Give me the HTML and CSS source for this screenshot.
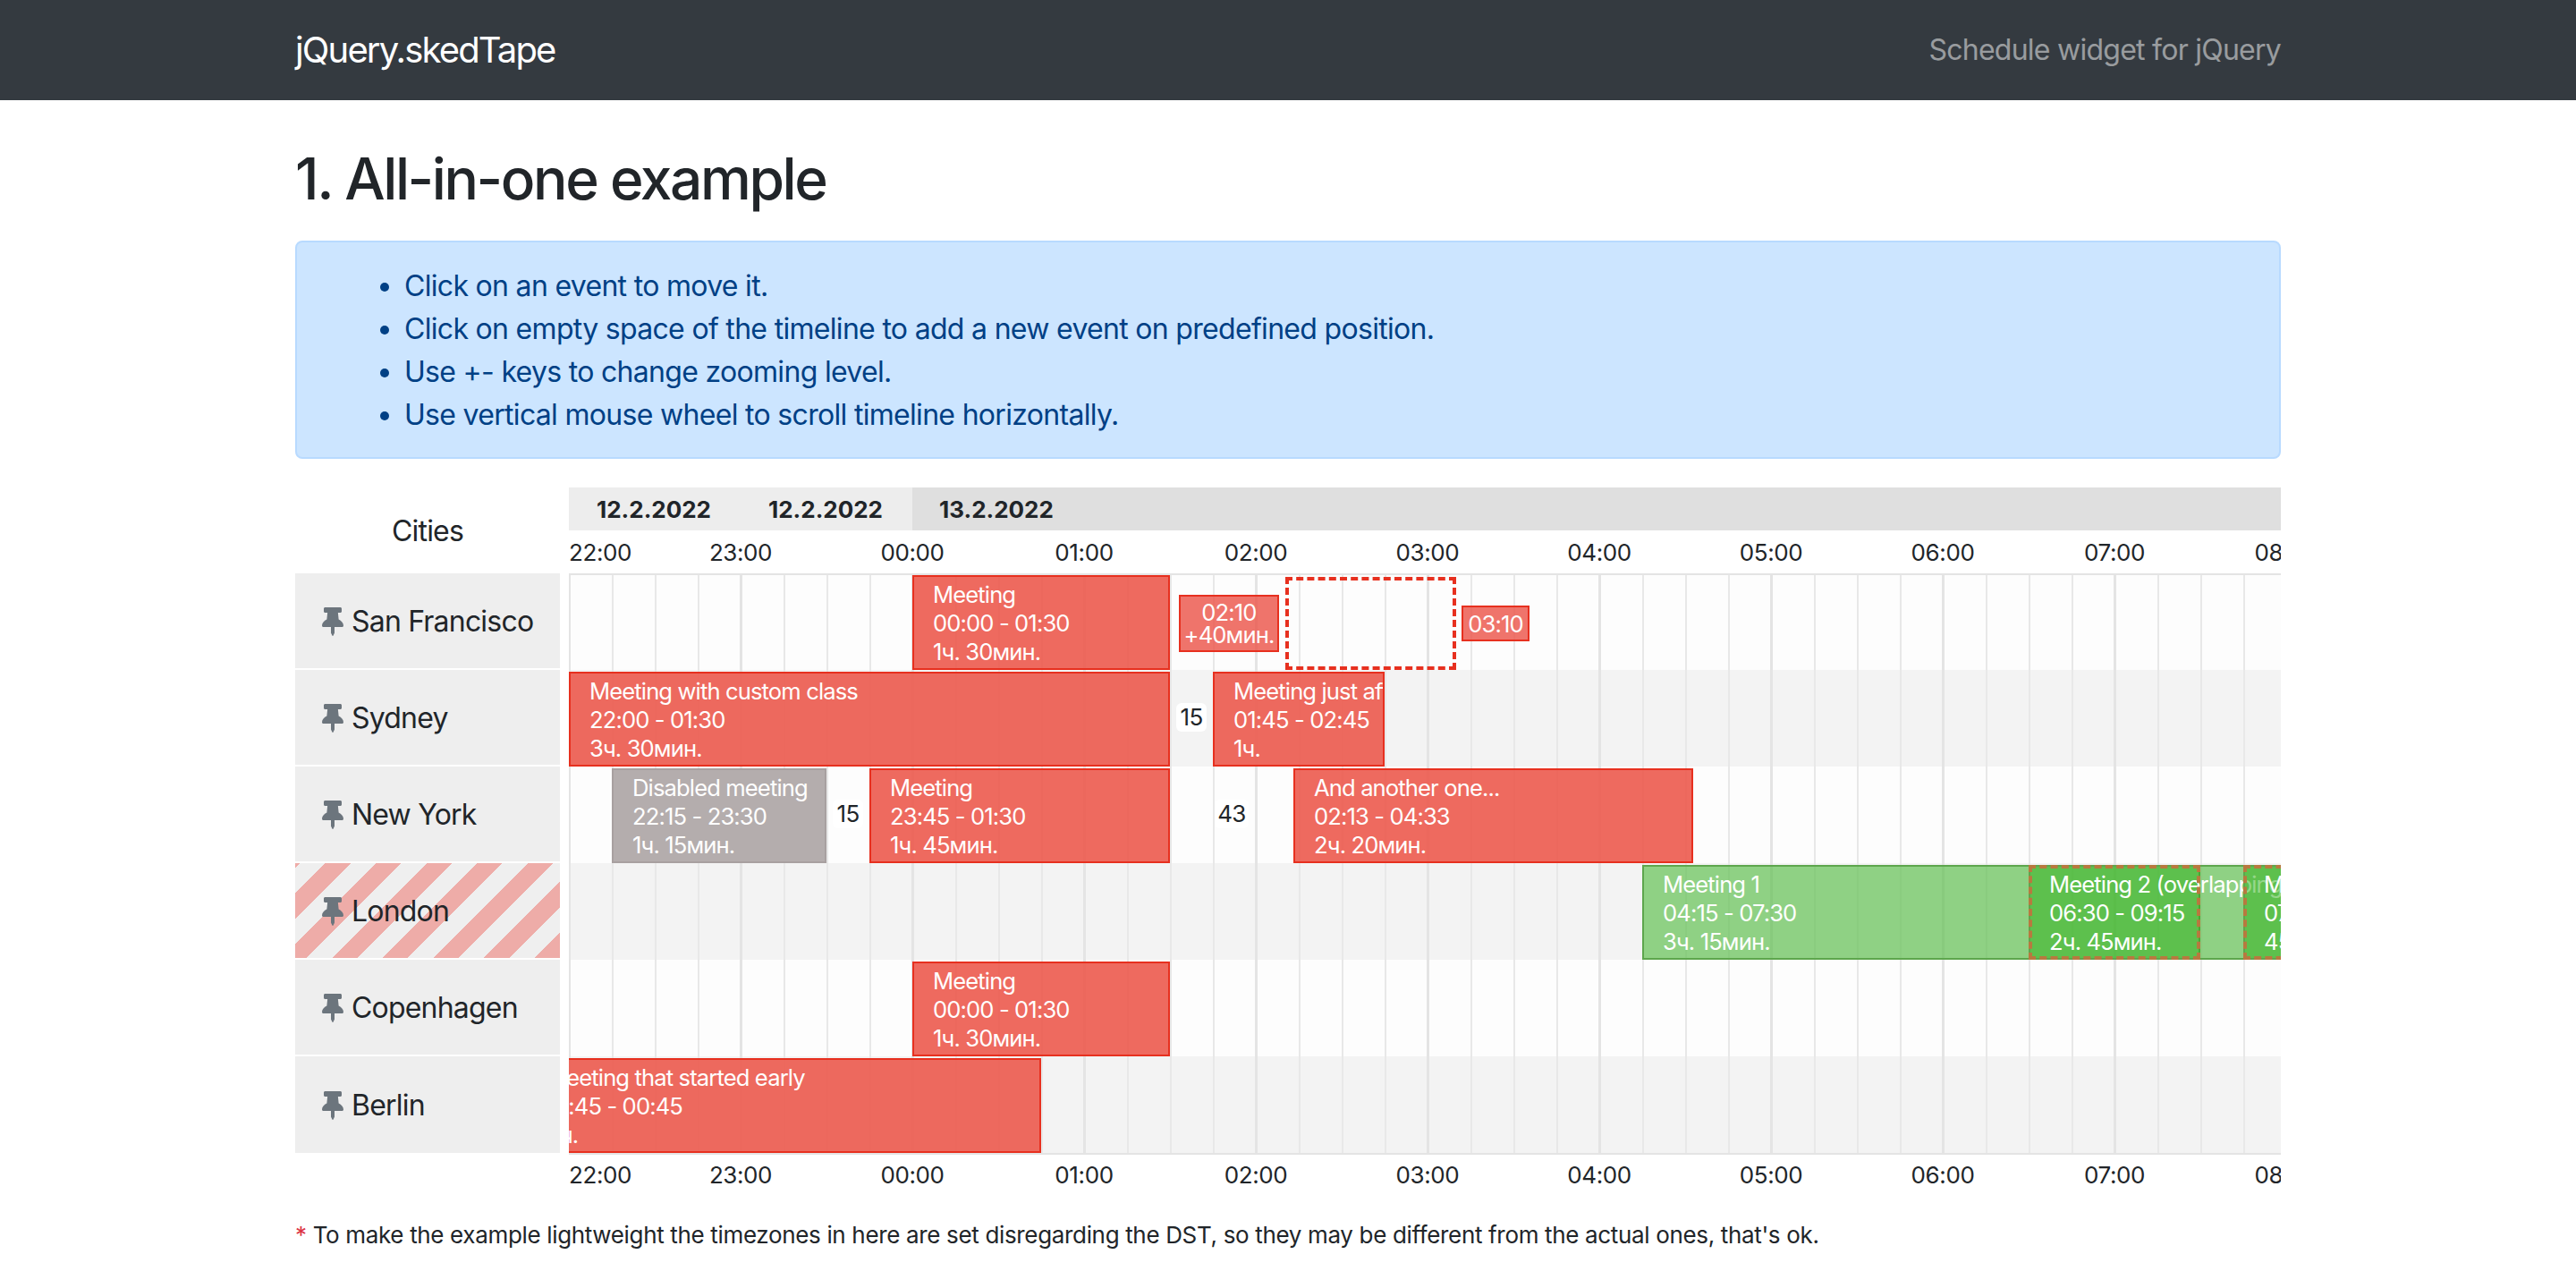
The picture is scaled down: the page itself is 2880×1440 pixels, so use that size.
FILE: index.html
```html
<!DOCTYPE html>
<html>
<head>
  <meta http-equiv="content-type" content="text/html; charset=utf-8" />
  <title>jQuery.skedTape</title>
  <link rel="stylesheet" href="styles.css">
</head>

<body>

<svg class="defs" width="0" height="0">
  <symbol id="pin" viewBox="0 0 384 512">
    <path d="M298 214L286 96h42c13 0 24-11 24-24V24c0-13-11-24-24-24H56C43 0 32 11 32 24v48c0 13 11 24 24 24h42L86 214C37 237 0 277 0 328c0 13 11 24 24 24h136v104c0 1 .3 2.500 .8 3.600l24 48c3 5.900 11.400 5.900 14.300 0l24-48c.5-1.100 .9-2.300 .9-3.600V352h136c13 0 24-11 24-24 0-51-38-91-86-114z"/>
  </symbol>
</svg>

<nav class="navbar">
  <div class="container navbar-inner">
    <span class="brand">jQuery.skedTape</span>
    <span class="tagline">Schedule widget for jQuery</span>
  </div>
</nav>

<main class="container">
  <h2 class="title">1. All-in-one example</h2>

  <div class="alert">
    <ul>
      <li>Click on an event to move it.</li>
      <li>Click on empty space of the timeline to add a new event on predefined position.</li>
      <li>Use +- keys to change zooming level.</li>
      <li>Use vertical mouse wheel to scroll timeline horizontally.</li>
    </ul>
  </div>

  <div class="sked">
    <div class="locations">
      <div class="locations-head">Cities</div>
      <div class="location"><svg class="pin"><use href="#pin"/></svg>San Francisco</div>
      <div class="location"><svg class="pin"><use href="#pin"/></svg>Sydney</div>
      <div class="location"><svg class="pin"><use href="#pin"/></svg>New York</div>
      <div class="location striped"><svg class="pin"><use href="#pin"/></svg>London</div>
      <div class="location"><svg class="pin"><use href="#pin"/></svg>Copenhagen</div>
      <div class="location"><svg class="pin"><use href="#pin"/></svg>Berlin</div>
    </div>

    <div class="tape">
      <div class="dates">
        <div class="date">12.2.2022</div>
        <div class="date">12.2.2022</div>
        <div class="date date-next">13.2.2022</div>
      </div>

      <div class="hours">
        <span>22:00</span><span>23:00</span><span>00:00</span><span>01:00</span><span>02:00</span><span>03:00</span><span>04:00</span><span>05:00</span><span>06:00</span><span>07:00</span><span>08:00</span>
      </div>

      <div class="rows">
        <div class="row">
          <div class="event" style="left: 384px; width: 288px;">Meeting<br>00:00 - 01:30<br>1ч. 30мин.</div>
          <div class="event event-mini" style="left: 682px; width: 112px; top: 24px; height: 64px;">02:10<br>+40мин.</div>
          <div class="event-dummy" style="left: 801px; width: 191px;"></div>
          <div class="event event-mini" style="left: 998px; width: 76px; top: 36px; height: 40px;">03:10</div>
        </div>

        <div class="row">
          <div class="event" style="left: 0; width: 672px;">Meeting with custom class<br>22:00 - 01:30<br>3ч. 30мин.</div>
          <div class="gap" style="left: 679px; width: 34px;">15</div>
          <div class="event" style="left: 720px; width: 192px;">Meeting just after<br>01:45 - 02:45<br>1ч.</div>
        </div>

        <div class="row">
          <div class="event event-disabled" style="left: 48px; width: 240px;">Disabled meeting<br>22:15 - 23:30<br>1ч. 15мин.</div>
          <div class="gap" style="left: 295px; width: 34px;">15</div>
          <div class="event" style="left: 336px; width: 336px;">Meeting<br>23:45 - 01:30<br>1ч. 45мин.</div>
          <div class="gap" style="left: 722px; width: 38px;">43</div>
          <div class="event" style="left: 810px; width: 447px;">And another one...<br>02:13 - 04:33<br>2ч. 20мин.</div>
        </div>

        <div class="row">
          <div class="event event-green" style="left: 1200px; width: 624px;">Meeting 1<br>04:15 - 07:30<br>3ч. 15мин.</div>
          <div class="event event-green" style="left: 1632px; width: 528px;">Meeting 2 (overlapping)<br>06:30 - 09:15<br>2ч. 45мин.</div>
          <div class="event event-green" style="left: 1872px; width: 288px;">Meeting 3<br>07:45 - 09:15<br>45мин.</div>
          <div class="overlap" style="left: 1632px; width: 192px;"></div>
          <div class="overlap" style="left: 1872px; width: 288px;"></div>
        </div>

        <div class="row">
          <div class="event" style="left: 384px; width: 288px;">Meeting<br>00:00 - 01:30<br>1ч. 30мин.</div>
        </div>

        <div class="row">
          <div class="event" style="left: -48px; width: 576px;">Meeting that started early<br>21:45 - 00:45<br>3ч.</div>
        </div>
      </div>

      <div class="hours hours-bottom">
        <span>22:00</span><span>23:00</span><span>00:00</span><span>01:00</span><span>02:00</span><span>03:00</span><span>04:00</span><span>05:00</span><span>06:00</span><span>07:00</span><span>08:00</span>
      </div>
    </div>
  </div>

  <p class="note"><span class="star">*</span> To make the example lightweight the timezones in here are set disregarding the DST, so they may be different from the actual ones, that's ok.</p>
</main>

</body>
</html>
```

FILE: styles.css
```css
* {
    box-sizing: border-box;
}
body {
    margin: 0;
    font-family: Inter, "Liberation Sans", sans-serif;
    font-size: 32px;
    line-height: 1.5;
    color: #212529;
    background-color: #fff;
}
.defs {
    display: block;
    height: 0;
}
.container {
    width: 2220px;
    margin: 0 auto;
}

.navbar {
    height: 112px;
    background-color: #343a40;
}
.navbar-inner {
    display: flex;
    justify-content: space-between;
    align-items: center;
    height: 100%;
}
.brand {
    color: #fff;
    font-size: 40px;
    letter-spacing: -1.85px;
}
.tagline {
    color: rgba(255, 255, 255, 0.5);
    font-size: 32px;
    letter-spacing: -0.75px;
}

.title {
    margin: 0;
    padding: 50px 0 31px;
    font-size: 64px;
    font-weight: 550;
    line-height: 76px;
    letter-spacing: -2.4px;
}

.alert {
    margin-bottom: 32px;
    padding: 25px 40px 19px;
    height: 244px;
    color: #004085;
    background-color: #cce5ff;
    border: 2px solid #b8daff;
    border-radius: 8px;
    letter-spacing: -0.69px;
}
.alert ul {
    margin: 0;
    padding-left: 80px;
}

.sked {
    display: flex;
    gap: 10px;
}
.locations {
    flex: 0 0 296px;
}
.locations-head {
    height: 96px;
    padding-top: 2px;
    display: flex;
    align-items: center;
    justify-content: center;
    letter-spacing: -0.8px;
}
.location {
    display: flex;
    align-items: center;
    height: 106px;
    margin-bottom: 2px;
    padding: 2px 0 0 30px;
    background-color: #eee;
    letter-spacing: -0.8px;
}
.location:last-child {
    height: 108px;
    margin-bottom: 0;
}
.location.striped {
    background-image: repeating-linear-gradient(135deg, #eeaca8 0, #eeaca8 4px, #efefef 4px, #efefef 24px, #eeaca8 24px, #eeaca8 40px);
}
.pin {
    flex: none;
    width: 24px;
    height: 32px;
    margin-right: 9px;
    fill: #6c757d;
}

.tape {
    width: 1914px;
    overflow: hidden;
}
.dates {
    display: flex;
    height: 48px;
}
.date {
    flex: 0 0 192px;
    padding-left: 31px;
    background-color: #ededed;
    font-size: 26px;
    font-weight: 700;
    line-height: 50px;
    letter-spacing: 0;
}
.date-next {
    flex: 1;
    padding-left: 30px;
    background-color: #dfdfdf;
}
.hours {
    display: flex;
    height: 48px;
    font-size: 26px;
    line-height: 50px;
    letter-spacing: -0.4px;
}
.hours span {
    flex: 0 0 192px;
    text-align: center;
}
.hours span:first-child {
    flex-basis: 96px;
    text-align: left;
}
.hours-bottom {
    line-height: 46px;
}

/* the top line sits over the first row, events start right under it */
.rows {
    position: relative;
    border-bottom: 2px solid #e4e4e4;
}
.rows::before {
    content: "";
    position: absolute;
    z-index: 1;
    top: 0;
    left: 0;
    right: 0;
    height: 2px;
    background-color: #e4e4e4;
}
.row {
    position: relative;
    height: 108px;
    background-color: #fdfdfd;
    background-image:
        linear-gradient(90deg, #e4e4e4 3px, transparent 3px),
        linear-gradient(90deg, #e8e8e8 2px, transparent 2px);
    background-size: 192px 100%, 48px 100%;
    background-position: 191px 0, 0 0;
}
.row:nth-child(even) {
    background-color: #f3f3f3;
}

.event {
    position: absolute;
    top: 2px;
    height: 106px;
    padding: 4px 21px 2px;
    overflow: hidden;
    color: #fff;
    background-color: rgba(236, 90, 78, 0.9);
    border: 2px solid #e7301f;
    font-size: 25.6px;
    line-height: 32px;
    white-space: nowrap;
    letter-spacing: -0.88px;
}
.event-mini {
    display: flex;
    align-items: center;
    justify-content: center;
    padding: 0;
    text-align: center;
    line-height: 25px;
    background-color: rgba(235, 85, 75, 0.82);
}
.event-disabled {
    background-color: #b4adad;
    border-color: #a8a0a0;
}
.event-green {
    background-color: rgba(43, 175, 21, 0.5);
    border-color: #5da64d;
}
.event-dummy {
    position: absolute;
    top: 4px;
    height: 104px;
    border: 4px dashed #e7301f;
}
.overlap {
    position: absolute;
    top: 2px;
    height: 106px;
    border: 4px dashed #b8793f;
}
.gap {
    position: absolute;
    top: 37px;
    height: 32px;
    background-color: #fff;
    border-radius: 6px;
    font-size: 26px;
    line-height: 32px;
    text-align: center;
    letter-spacing: -0.65px;
}

.note {
    margin: 22px 0 0;
    font-size: 26px;
    line-height: 39px;
    letter-spacing: -0.34px;
}
.star {
    color: #dc3545;
}
```
